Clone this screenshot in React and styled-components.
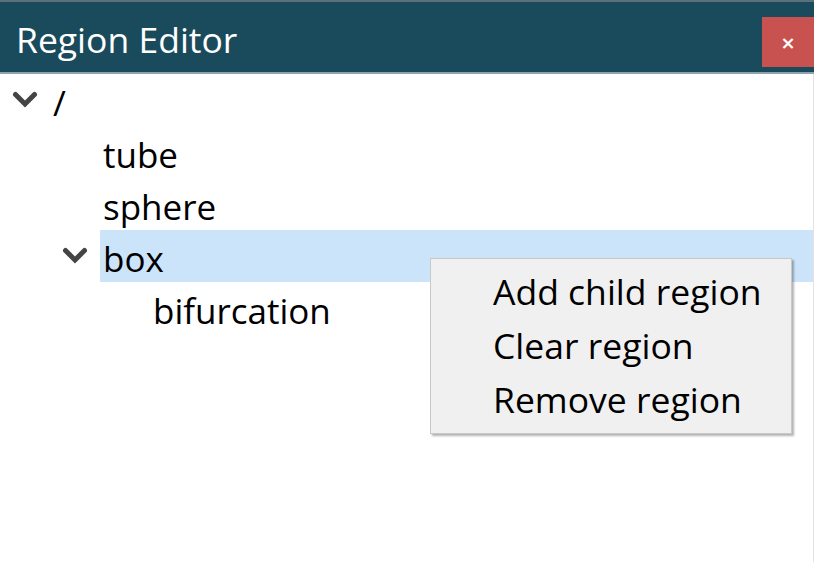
import React from 'react'
import styled, { createGlobalStyle } from 'styled-components'

const GlobalStyle = createGlobalStyle`
  html, body {
    margin: 0;
    padding: 0;
    background: #ffffff;
  }
  body {
    font-family: 'Open Sans', 'Noto Sans', sans-serif;
  }
`

const Window = styled.div`
  width: 814px;
  height: 562px;
  display: flex;
  flex-direction: column;
  border-top: 2px solid #5d7079;
  box-sizing: border-box;
  overflow: hidden;
  position: relative;
`

const TitleBar = styled.div`
  height: 70px;
  background: #1a4b5c;
  border-bottom: 2px solid #8ea3ab;
  display: flex;
  align-items: center;
  justify-content: space-between;
  padding-left: 16px;
  box-sizing: content-box;
`

const Title = styled.h1`
  margin: 0 0 -3px;
  font-family: 'Open Sans', sans-serif;
  font-weight: 400;
  font-size: 35.5px;
  color: #ffffff;
`

const CloseButton = styled.button`
  align-self: flex-start;
  width: 52px;
  height: 50px;
  margin-top: 15px;
  border: none;
  background: #c85250;
  color: #ffffff;
  font-size: 18px;
  font-weight: 700;
  font-family: 'DejaVu Sans', sans-serif;
  display: flex;
  align-items: center;
  justify-content: center;
  padding: 0;
`

const Body = styled.div`
  flex: 1;
  border-right: 1px solid #e3e3e3;
`

const Row = styled.div`
  height: 52px;
  display: flex;
  align-items: center;
  padding-left: ${p => p.$level * 50 + 10}px;
`

const Toggle = styled.span`
  width: 40px;
  height: 52px;
  display: flex;
  align-items: center;
  padding-left: 2px;
  box-sizing: border-box;
  flex-shrink: 0;
`

const Label = styled.span`
  flex: 1;
  height: 52px;
  box-sizing: border-box;
  display: flex;
  align-items: center;
  padding: 4px 0 0 3px;
  font-size: 35px;
  color: #000000;
  background: ${p => (p.$selected ? '#cce4fa' : 'transparent')};
`

const Menu = styled.div`
  position: absolute;
  left: 430px;
  top: 256px;
  width: 362px;
  padding: 5px 0 7px;
  background: #f0f0f0;
  border: 1px solid #c8c8c8;
  box-shadow: 2px 2px 2px rgba(0, 0, 0, 0.3);
  box-sizing: border-box;
`

const MenuItem = styled.div`
  height: 54px;
  display: flex;
  align-items: center;
  padding-left: 62px;
  font-size: 35.5px;
  color: #000000;
`

const Chevron = () => (
  <svg width="26" height="18" viewBox="0 0 26 18">
    <path d="M3.5 3.5 L13 13 L22.5 3.5" fill="none" stroke="#444" strokeWidth="5" strokeLinecap="round" strokeLinejoin="miter" />
  </svg>
)

const nodes = [
  { label: '/', level: 0, open: true },
  { label: 'tube', level: 1 },
  { label: 'sphere', level: 1 },
  { label: 'box', level: 1, open: true, selected: true },
  { label: 'bifurcation', level: 2 },
]

export default function App() {
  return (
    <>
      <GlobalStyle />
      <Window>
        <TitleBar>
          <Title>Region Editor</Title>
          <CloseButton>×</CloseButton>
        </TitleBar>
        <Body>
          {nodes.map(n => (
            <Row key={n.label} $level={n.level}>
              <Toggle>{n.open && <Chevron />}</Toggle>
              <Label $selected={n.selected}>{n.label}</Label>
            </Row>
          ))}
        </Body>
        <Menu>
          <MenuItem>Add child region</MenuItem>
          <MenuItem>Clear region</MenuItem>
          <MenuItem>Remove region</MenuItem>
        </Menu>
      </Window>
    </>
  )
}
